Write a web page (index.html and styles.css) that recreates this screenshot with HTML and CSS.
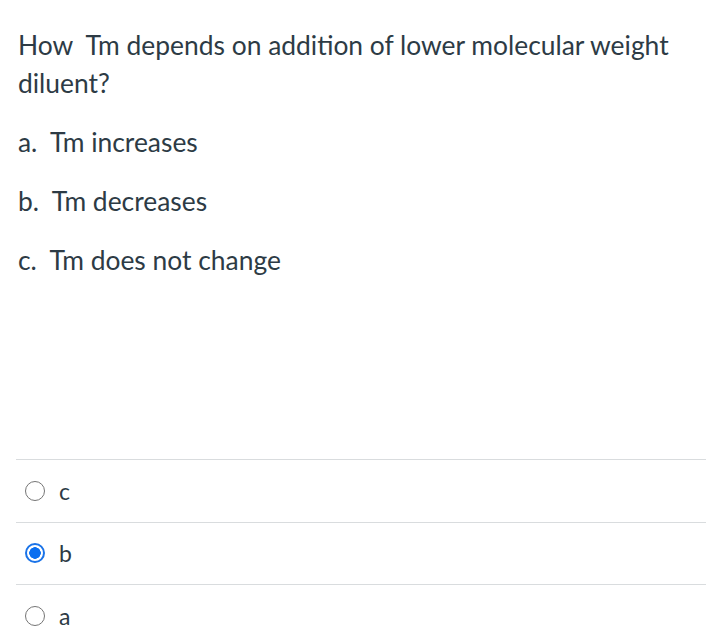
FILE: index.html
```html
<!DOCTYPE html>
<html>
<head>
<meta charset="utf-8">
<link rel="stylesheet" href="styles.css">
</head>
<body>
<div class="question">
  <p class="stem">How&nbsp; Tm depends on addition of lower molecular weight diluent?</p>
  <p class="choice">a.&nbsp; Tm increases</p>
  <p class="choice">b.&nbsp; Tm decreases</p>
  <p class="choice">c.&nbsp; Tm does not change</p>
</div>
<div class="answers">
  <label class="answer"><span class="radio"></span><span class="label">c</span></label>
  <label class="answer"><span class="radio checked"></span><span class="label">b</span></label>
  <label class="answer"><span class="radio"></span><span class="label">a</span></label>
</div>
</body>
</html>
```
FILE: styles.css
```css
html, body {
  margin: 0;
  padding: 0;
  background: #fff;
}
body {
  font-family: Lato, "Liberation Sans", sans-serif;
  color: #2d3b45;
  width: 706px;
  height: 641px;
  overflow: hidden;
}
.question {
  padding: 26px 16px 0 18px;
  height: 459px;
  box-sizing: border-box;
}
.stem {
  margin: 0 0 21px;
  font-size: 26.4px;
  line-height: 38px;
}
.choice {
  margin: 0 0 21px;
  font-size: 26.4px;
  line-height: 38px;
}
.answers {
  margin-left: 16px;
}
.answer {
  display: flex;
  align-items: center;
  height: 62.5px;
  border-top: 1px solid #d9dcde;
  padding-left: 9px;
  box-sizing: border-box;
}
.radio {
  width: 20px;
  height: 20px;
  border: 1.5px solid #757575;
  border-radius: 50%;
  box-sizing: border-box;
  margin-right: 14px;
  flex: none;
}
.radio.checked {
  border: 2px solid #1a73e8;
  background: radial-gradient(circle, #0b6ff0 0 5.5px, #fff 6px);
}
.label {
  font-size: 23px;
  color: #2d3b45;
}
```
